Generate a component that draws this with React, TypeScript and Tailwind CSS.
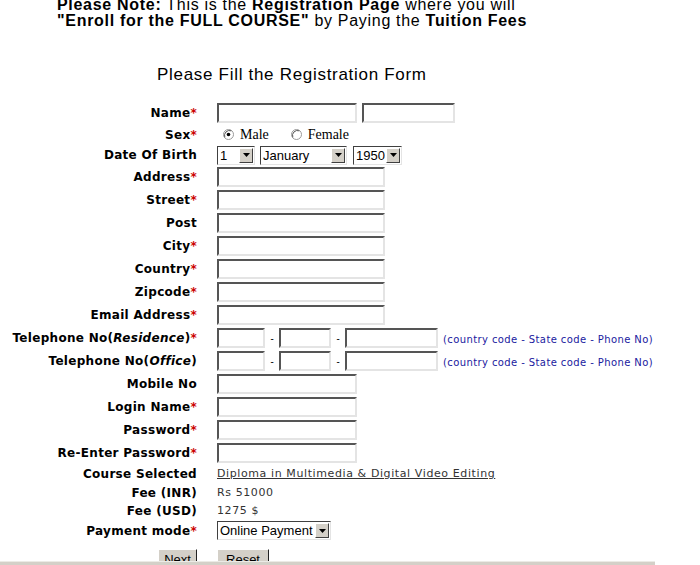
import clsx from "clsx";
import type { ReactNode } from "react";

const label =
  "font-['DejaVu_Sans',Verdana,sans-serif] text-[12px] font-bold tracking-[0.3px] text-black";

function Req() {
  return <span className="text-[#cc0000]">*</span>;
}

function TextBox({ className }: { className: string }) {
  return (
    <input
      type="text"
      className={clsx(
        "block h-[20px] border-2 border-t-[#555] border-r-[#e4e4e4] border-b-[#e4e4e4] border-l-[#555] bg-white outline-none",
        className
      )}
    />
  );
}

function Drop({ value, className }: { value: string; className: string }) {
  return (
    <div
      className={clsx(
        "flex h-[19px] items-stretch border border-t-[#404040] border-r-[#e4e4e4] border-b-[#e4e4e4] border-l-[#404040] bg-white",
        className
      )}
    >
      <span className="min-w-0 flex-1 overflow-hidden pl-[2px] font-['Liberation_Sans',Arial,sans-serif] text-[13px] leading-[17px] whitespace-nowrap text-black">
        {value}
      </span>
      <span className="m-px flex w-[14px] shrink-0 items-center justify-center border border-t-white border-r-[#404040] border-b-[#404040] border-l-white bg-[#d4d0c8]">
        <svg width="7" height="4" viewBox="0 0 7 4">
          <path d="M0 0h7L3.5 4z" fill="#000" />
        </svg>
      </span>
    </div>
  );
}

function Radio({ on }: { on?: boolean }) {
  return (
    <svg width="11" height="11" viewBox="0 0 11 11" className="block">
      <circle cx="5.5" cy="5.5" r="5" fill="#fff" stroke="#9a9a9a" />
      <path d="M1.8 8.2A5 5 0 0 1 8.2 1.8" fill="none" stroke="#555" />
      {on && <circle cx="5.5" cy="5.5" r="1.8" fill="#000" />}
    </svg>
  );
}

function Row({ h, name, children }: { h: string; name: ReactNode; children?: ReactNode }) {
  return (
    <div className={clsx("flex items-center", h)}>
      <div className={clsx("w-[197px] shrink-0 text-right whitespace-nowrap", label)}>{name}</div>
      <div className="ml-[20px] flex items-center">{children}</div>
    </div>
  );
}

function Phone() {
  const dash = <span className="w-[14px] text-center text-[10px] leading-none text-black">-</span>;
  return (
    <>
      <TextBox className="w-[48px]" />
      {dash}
      <TextBox className="w-[52px]" />
      {dash}
      <TextBox className="w-[93px]" />
      <span className="mt-[3px] ml-[5px] font-['DejaVu_Sans',Verdana,sans-serif] text-[10px] tracking-[0.4px] whitespace-nowrap text-[#1a1aa0]">
        (country code - State code - Phone No)
      </span>
    </>
  );
}

const info =
  "font-['DejaVu_Sans',Verdana,sans-serif] text-[11px] tracking-[0.6px] text-[#333]";

export default function App() {
  return (
    <div className="flex h-[565px] w-[700px] flex-col overflow-hidden bg-white">
      <div className="flex-1 overflow-hidden">
        <div className="-mt-[3px] ml-[57px] font-['Liberation_Sans',Tahoma,sans-serif] text-[16px] leading-4 tracking-[0.7px] whitespace-nowrap text-black">
          <p>
            <b>Please Note:</b> This is the <b>Registration Page</b> where you will
          </p>
          <p>
            <b>"Enroll for the FULL COURSE"</b> by Paying the <b>Tuition Fees</b>
          </p>
        </div>

        <h2 className="mt-[36px] ml-[157px] font-['Liberation_Sans',Tahoma,sans-serif] text-[17px] leading-5 tracking-[0.7px] text-black">
          Please Fill the Registration Form
        </h2>

        <form className="mt-[17px]">
          <Row h="h-[22px]" name={<>Name<Req /></>}>
            <TextBox className="w-[140px]" />
            <TextBox className="ml-[5px] w-[93px]" />
          </Row>
          <Row h="h-[21px]" name={<>Sex<Req /></>}>
            <div className="flex items-center font-['Liberation_Serif',serif] text-[14px] text-black">
              <span className="ml-[6px]"><Radio on /></span>
              <span className="ml-[6px]">Male</span>
              <span className="ml-[22px]"><Radio /></span>
              <span className="ml-[6px]">Female</span>
            </div>
          </Row>
          <Row h="h-[20px]" name="Date Of Birth">
            <Drop value="1" className="w-[38px]" />
            <Drop value="January" className="ml-[5px] w-[87px]" />
            <Drop value="1950" className="ml-[6px] w-[49px]" />
          </Row>
          <Row h="h-[23px]" name={<>Address<Req /></>}>
            <TextBox className="w-[168px]" />
          </Row>
          <Row h="h-[23px]" name={<>Street<Req /></>}>
            <TextBox className="w-[168px]" />
          </Row>
          <Row h="h-[23px]" name="Post">
            <TextBox className="w-[168px]" />
          </Row>
          <Row h="h-[23px]" name={<>City<Req /></>}>
            <TextBox className="w-[168px]" />
          </Row>
          <Row h="h-[23px]" name={<>Country<Req /></>}>
            <TextBox className="w-[168px]" />
          </Row>
          <Row h="h-[23px]" name={<>Zipcode<Req /></>}>
            <TextBox className="w-[168px]" />
          </Row>
          <Row h="h-[23px]" name={<>Email Address<Req /></>}>
            <TextBox className="w-[168px]" />
          </Row>
          <Row h="h-[23px]" name={<>Telephone No(<i>Residence</i>)<Req /></>}>
            <Phone />
          </Row>
          <Row h="h-[23px]" name={<>Telephone No(<i>Office</i>)</>}>
            <Phone />
          </Row>
          <Row h="h-[23px]" name="Mobile No">
            <TextBox className="w-[140px]" />
          </Row>
          <Row h="h-[23px]" name={<>Login Name<Req /></>}>
            <TextBox className="w-[140px]" />
          </Row>
          <Row h="h-[23px]" name={<>Password<Req /></>}>
            <TextBox className="w-[140px]" />
          </Row>
          <Row h="h-[23px]" name={<>Re-Enter Password<Req /></>}>
            <TextBox className="w-[140px]" />
          </Row>
          <Row h="h-[20px]" name="Course Selected">
            <span className={clsx(info, "underline")}>Diploma in Multimedia &amp; Digital Video Editing</span>
          </Row>
          <Row h="h-[18px]" name="Fee (INR)">
            <span className={info}>Rs 51000</span>
          </Row>
          <Row h="h-[18px]" name="Fee (USD)">
            <span className={info}>1275 $</span>
          </Row>
          <Row h="h-[21px]" name={<>Payment mode<Req /></>}>
            <Drop value="Online Payment" className="w-[114px]" />
          </Row>

          <div className="mt-[8px] flex">
            <div className="flex w-[197px] justify-end">
              <button
                type="button"
                className="h-[22px] w-[39px] border border-t-white border-r-[#222] border-b-[#222] border-l-white bg-[#d4d0c8] font-['Liberation_Sans',Arial,sans-serif] text-[13px] text-black"
              >
                Next
              </button>
            </div>
            <button
              type="button"
              className="ml-[20px] h-[22px] w-[52px] border border-t-white border-r-[#222] border-b-[#222] border-l-white bg-[#d4d0c8] font-['Liberation_Sans',Arial,sans-serif] text-[13px] text-black"
            >
              Reset
            </button>
          </div>
        </form>
      </div>
      <div className="h-[4px] w-[655px] shrink-0 border-t border-[#ecebe6] bg-[#d4d0c8]" />
    </div>
  );
}
